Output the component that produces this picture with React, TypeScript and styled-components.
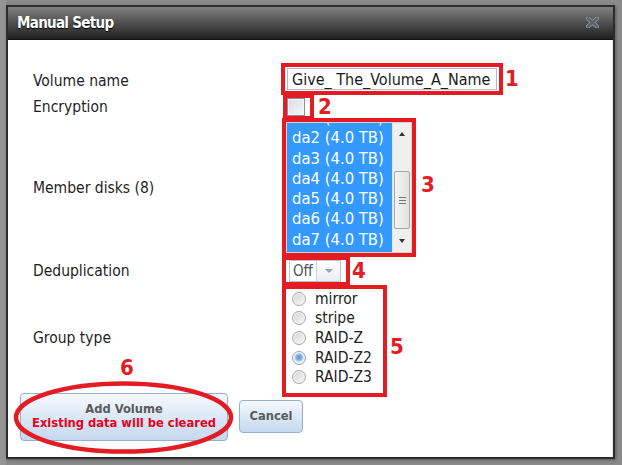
import React from 'react';
import styled, { createGlobalStyle } from 'styled-components';

const RED = '#e31b23';
const DISKS = ['da1', 'da2', 'da3', 'da4', 'da5', 'da6', 'da7'];
const GROUPS = ['mirror', 'stripe', 'RAID-Z', 'RAID-Z2', 'RAID-Z3'];

const GlobalStyle = createGlobalStyle`
  html, body {
    margin: 0;
    padding: 0;
  }
  body {
    width: 622px;
    height: 465px;
    overflow: hidden;
    background: #8a8a8a;
    font-family: "DejaVu Sans Condensed", "DejaVu Sans", Verdana, sans-serif;
    font-stretch: condensed;
    color: #1e1e1e;
  }
`;

function App() {
    return (
        <>
            <GlobalStyle />
            <Backdrop>
                <Dialog>
                    <TitleBar>
                        <Title>Manual Setup</Title>
                        <CloseIcon width="13" height="11" viewBox="0 0 13 11">
                            <path d="M2 1.5 L11 9.5 M11 1.5 L2 9.5" stroke="#8d949a" strokeWidth="4.2" strokeLinecap="round" />
                            <path d="M2 1.5 L11 9.5 M11 1.5 L2 9.5" stroke="#5b636a" strokeWidth="2.4" strokeLinecap="round" />
                        </CloseIcon>
                    </TitleBar>
                    <Body>
                        <Form>
                            <Row>
                                <Label $pt={4}>Volume name</Label>
                                <Marked $pad="1px 2px">
                                    <TextInput defaultValue="Give_ The_Volume_A_Name" />
                                </Marked>
                                <Num $ml={2}>1</Num>
                            </Row>
                            <Row $pull={1}>
                                <Label>Encryption</Label>
                                <Marked $pad="0 5px 0 0" $ml={2}>
                                    <Checkbox />
                                </Marked>
                                <Num $ml={4}>2</Num>
                            </Row>
                            <Row $pull={2}>
                                <Label>Member disks (8)</Label>
                                <Marked $ml={1}>
                                    <ListBox>
                                        <ListItems>
                                            {DISKS.map((d) => (
                                                <ListItem key={d}>{d} (4.0 TB)</ListItem>
                                            ))}
                                        </ListItems>
                                        <ScrollBar>
                                            <ScrollButton>
                                                <Arrow $up />
                                            </ScrollButton>
                                            <Track>
                                                <Thumb>
                                                    <Grip />
                                                </Thumb>
                                            </Track>
                                            <ScrollButton>
                                                <Arrow />
                                            </ScrollButton>
                                        </ScrollBar>
                                    </ListBox>
                                </Marked>
                                <Num $ml={5} $pb={6}>3</Num>
                            </Row>
                            <Row $pull={1}>
                                <Label>Deduplication</Label>
                                <Marked $pad="0 5px 0 3px" $ml={1}>
                                    <Select>
                                        <SelectValue>Off</SelectValue>
                                        <SelectButton>
                                            <Arrow $muted />
                                        </SelectButton>
                                    </Select>
                                </Marked>
                                <Num $ml={2}>4</Num>
                            </Row>
                            <Row $pull={1}>
                                <Label $pb={6}>Group type</Label>
                                <Marked $pad="0 4px 6px 6px" $ml={1}>
                                    <RadioList>
                                        {GROUPS.map((g) => (
                                            <RadioRow key={g}>
                                                <Radio $checked={g === 'RAID-Z2'} />
                                                <span>{g}</span>
                                            </RadioRow>
                                        ))}
                                    </RadioList>
                                </Marked>
                                <Num $ml={3} $pt={12}>5</Num>
                            </Row>
                        </Form>
                        <Buttons>
                            <AddWrap>
                                <Button $w={208} $h={48}>
                                    <span>Add Volume</span>
                                    <Warning>Existing data will be cleared</Warning>
                                </Button>
                                <Ring width="221" height="73" viewBox="0 0 221 73">
                                    <ellipse cx="110.5" cy="36.5" rx="107.5" ry="34" fill="none" stroke={RED} strokeWidth="4.5" />
                                </Ring>
                                <Six>6</Six>
                            </AddWrap>
                            <Button $w={64} $h={33}>Cancel</Button>
                        </Buttons>
                    </Body>
                </Dialog>
            </Backdrop>
        </>
    );
}

export default App;

const Backdrop = styled.div`
    width: 622px;
    height: 465px;
    box-sizing: border-box;
    padding: 5px 0 0 6px;
    background: linear-gradient(90deg, #959595 0, #959595 6px, #8a8a8a 6px);
`;

const Dialog = styled.div`
    width: 609px;
    height: 454px;
    box-sizing: border-box;
    border: 2px solid #2c2c2c;
    background: #fff;
    display: flex;
    flex-direction: column;
    box-shadow: 1px 1px 3px rgba(0, 0, 0, 0.35);
`;

const TitleBar = styled.div`
    height: 33px;
    flex: none;
    box-sizing: border-box;
    display: flex;
    align-items: center;
    justify-content: space-between;
    padding: 0 14px 0 9px;
    background: linear-gradient(#808080, #4a4a4a 55%, #1f1f1f);
    border-bottom: 1px solid #121212;
`;

const Title = styled.div`
    color: #fff;
    font-weight: bold;
    font-size: 15px;
    letter-spacing: -0.7px;
    text-shadow: 0 1px 1px #000;
`;

const CloseIcon = styled.svg`
    display: block;
    margin-top: -1px;
`;

const Body = styled.div`
    flex: 1;
    padding: 23px 0 0 12px;
    border-right: 1px solid #e4e4e4;
`;

const Form = styled.div`
    display: flex;
    flex-direction: column;
    padding-left: 13px;
`;

const Row = styled.div<{ $pull?: number }>`
    display: flex;
    align-items: center;
    margin-top: ${(p) => -(p.$pull ?? 0)}px;
`;

const Label = styled.div<{ $pt?: number; $pb?: number }>`
    width: 248px;
    flex: none;
    font-size: 15.5px;
    padding-top: ${(p) => p.$pt ?? 0}px;
    padding-bottom: ${(p) => p.$pb ?? 0}px;
`;

const Marked = styled.div<{ $pad?: string; $ml?: number }>`
    display: flex;
    border: 4px solid ${RED};
    padding: ${(p) => p.$pad ?? '0'};
    margin-left: ${(p) => p.$ml ?? 0}px;
`;

const Num = styled.span<{ $ml?: number; $pt?: number; $pb?: number }>`
    color: ${RED};
    font-weight: bold;
    font-size: 22px;
    line-height: 22px;
    margin-left: ${(p) => p.$ml ?? 0}px;
    padding-top: ${(p) => p.$pt ?? 0}px;
    padding-bottom: ${(p) => p.$pb ?? 0}px;
`;

const TextInput = styled.input`
    width: 210px;
    height: 22px;
    box-sizing: border-box;
    margin: 0;
    padding: 0 4px;
    border: 1px solid #b3bcc6;
    font-family: inherit;
    font-stretch: condensed;
    font-size: 16px;
    color: #1a1a1a;
    outline: none;
`;

const Checkbox = styled.div`
    width: 18px;
    height: 18px;
    box-sizing: border-box;
    border: 1px solid #8e8f90;
    background: linear-gradient(135deg, #d9dde4, #f6f7f9);
    box-shadow: inset 0 0 0 1px #f4f4f4;
`;

const ListBox = styled.div`
    width: 126px;
    height: 131px;
    box-sizing: border-box;
    border: 1px solid #d4d4d4;
    display: flex;
    overflow: hidden;
`;

const ListItems = styled.div`
    flex: 1;
    background: #3399ff;
    overflow: hidden;
`;

const ListItem = styled.div`
    height: 20.3px;
    line-height: 20.3px;
    padding-left: 5px;
    color: #fff;
    font-size: 16.5px;
    white-space: nowrap;
    &:first-child {
        margin-top: -15px;
    }
`;

const ScrollBar = styled.div`
    width: 18px;
    flex: none;
    display: flex;
    flex-direction: column;
    background: #efefef;
    border-left: 1px solid #e6e6e6;
`;

const ScrollButton = styled.div`
    height: 22px;
    flex: none;
    display: flex;
    align-items: center;
    justify-content: center;
`;

const Arrow = styled.span<{ $up?: boolean; $muted?: boolean }>`
    width: 0;
    height: 0;
    border-left: ${(p) => (p.$muted ? 4.5 : 3.5)}px solid transparent;
    border-right: ${(p) => (p.$muted ? 4.5 : 3.5)}px solid transparent;
    ${(p) => (p.$up ? 'border-bottom' : 'border-top')}: 4px solid ${(p) => (p.$muted ? '#8fa3ba' : '#333')};
`;

const Track = styled.div`
    flex: 1;
    display: flex;
    flex-direction: column;
    justify-content: flex-end;
    padding: 0 1px 1px;
`;

const Thumb = styled.div`
    height: 58px;
    box-sizing: border-box;
    border: 1px solid #a7a7a7;
    border-radius: 2px;
    background: linear-gradient(90deg, #f4f4f4, #e2e2e2);
    display: flex;
    align-items: center;
    justify-content: center;
`;

const Grip = styled.span`
    width: 7px;
    height: 5px;
    border-top: 1px solid #777;
    border-bottom: 1px solid #777;
    background: linear-gradient(#777, #777) center / 100% 1px no-repeat;
`;

const Select = styled.div`
    width: 52px;
    height: 22px;
    box-sizing: border-box;
    border: 1px solid #bcc5ce;
    display: flex;
    background: #fff;
`;

const SelectValue = styled.div`
    flex: 1;
    padding-left: 3px;
    font-size: 15px;
    line-height: 20px;
    color: #555;
`;

const SelectButton = styled.div`
    width: 23px;
    border-left: 1px solid #cbd2d9;
    background: linear-gradient(#fdfdfd, #ebeef1);
    display: flex;
    align-items: center;
    justify-content: center;
`;

const RadioList = styled.div`
    display: flex;
    flex-direction: column;
    width: 87px;
`;

const RadioRow = styled.div`
    height: 19.6px;
    display: flex;
    align-items: center;
    gap: 9px;
    font-size: 15.5px;
    color: #222;
`;

const Radio = styled.span<{ $checked?: boolean }>`
    width: 14px;
    height: 14px;
    box-sizing: border-box;
    border-radius: 50%;
    border: 1px solid ${(p) => (p.$checked ? '#8aa4bf' : '#a9a9a9')};
    background: ${(p) =>
        p.$checked
            ? 'radial-gradient(circle at 50% 45%, #5f95c9 0, #7eaedb 2.5px, #b9d4ec 4px, #eef3f8 5px)'
            : 'linear-gradient(135deg, #d5d5d5, #f7f7f7)'};
    box-shadow: inset 0 0 0 1px #f2f2f2;
`;

const Buttons = styled.div`
    display: flex;
    align-items: center;
    gap: 11px;
    margin-top: -4px;
`;

const AddWrap = styled.div`
    position: relative;
    display: flex;
`;

const Button = styled.div<{ $w: number; $h: number }>`
    width: ${(p) => p.$w}px;
    height: ${(p) => p.$h}px;
    box-sizing: border-box;
    border: 1px solid #93b0d1;
    border-radius: 4px;
    background: linear-gradient(#f6f9fd, #dce8f5 50%, #c5d9ef);
    display: flex;
    flex-direction: column;
    align-items: center;
    justify-content: center;
    font-weight: bold;
    font-size: 12.8px;
    line-height: 13.7px;
    color: #5a5a5a;
    padding-bottom: 2px;
`;

const Warning = styled.span`
    color: #e8001c;
`;

const Ring = styled.svg`
    position: absolute;
    left: -7px;
    top: -12px;
    pointer-events: none;
`;

const Six = styled.span`
    position: absolute;
    left: 100px;
    top: -36px;
    color: ${RED};
    font-weight: bold;
    font-size: 22px;
    line-height: 22px;
`;
